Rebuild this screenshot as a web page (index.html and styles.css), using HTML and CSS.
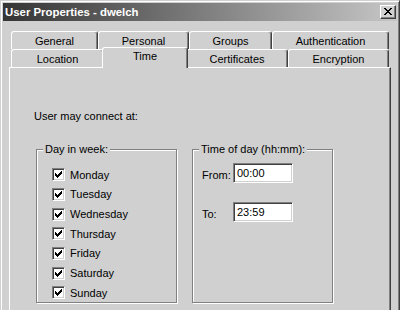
FILE: index.html
```html
<!DOCTYPE html>
<html>
<head>
<meta charset="utf-8">
<link rel="stylesheet" href="styles.css">
</head>
<body>
<div class="window">
  <div class="titlebar">
    <span class="title">User Properties - dwelch</span>
    <span class="close"><svg width="8" height="7" viewBox="0 0 8 7"><path d="M0 0h2v1H0z M6 0h2v1H6z M1 1h2v1H1z M5 1h2v1H5z M2 2h4v1H2z M3 3h2v1H3z M2 4h4v1H2z M1 5h2v1H1z M5 5h2v1H5z M0 6h2v1H0z M6 6h2v1H6z" fill="#000"/></svg></span>
  </div>
  <div class="sheet">
    <div class="row">
      <div class="tab w-general">General</div>
      <div class="tab w-personal">Personal</div>
      <div class="tab w-groups">Groups</div>
      <div class="tab w-auth">Authentication</div>
    </div>
    <div class="row">
      <div class="tab w-location">Location</div>
      <div class="tab sel w-time">Time</div>
      <div class="tab w-certs">Certificates</div>
      <div class="tab w-enc">Encryption</div>
    </div>
    <div class="panel">
      <div class="connect">User may connect at:</div>
      <div class="groups">
        <div class="group">
          <span class="legend">Day in week:</span>
          <div class="days">
            <div class="day"><span class="check"><svg width="7" height="7" viewBox="0 0 7 7"><path d="M0 2h1v3H0z M1 3h1v3H1z M2 4h1v3H2z M3 3h1v3H3z M4 2h1v3H4z M5 1h1v3H5z M6 0h1v3H6z" fill="#000"/></svg></span><span class="label">Monday</span></div>
            <div class="day"><span class="check"><svg width="7" height="7" viewBox="0 0 7 7"><path d="M0 2h1v3H0z M1 3h1v3H1z M2 4h1v3H2z M3 3h1v3H3z M4 2h1v3H4z M5 1h1v3H5z M6 0h1v3H6z" fill="#000"/></svg></span><span class="label">Tuesday</span></div>
            <div class="day"><span class="check"><svg width="7" height="7" viewBox="0 0 7 7"><path d="M0 2h1v3H0z M1 3h1v3H1z M2 4h1v3H2z M3 3h1v3H3z M4 2h1v3H4z M5 1h1v3H5z M6 0h1v3H6z" fill="#000"/></svg></span><span class="label">Wednesday</span></div>
            <div class="day"><span class="check"><svg width="7" height="7" viewBox="0 0 7 7"><path d="M0 2h1v3H0z M1 3h1v3H1z M2 4h1v3H2z M3 3h1v3H3z M4 2h1v3H4z M5 1h1v3H5z M6 0h1v3H6z" fill="#000"/></svg></span><span class="label">Thursday</span></div>
            <div class="day"><span class="check"><svg width="7" height="7" viewBox="0 0 7 7"><path d="M0 2h1v3H0z M1 3h1v3H1z M2 4h1v3H2z M3 3h1v3H3z M4 2h1v3H4z M5 1h1v3H5z M6 0h1v3H6z" fill="#000"/></svg></span><span class="label">Friday</span></div>
            <div class="day"><span class="check"><svg width="7" height="7" viewBox="0 0 7 7"><path d="M0 2h1v3H0z M1 3h1v3H1z M2 4h1v3H2z M3 3h1v3H3z M4 2h1v3H4z M5 1h1v3H5z M6 0h1v3H6z" fill="#000"/></svg></span><span class="label">Saturday</span></div>
            <div class="day"><span class="check"><svg width="7" height="7" viewBox="0 0 7 7"><path d="M0 2h1v3H0z M1 3h1v3H1z M2 4h1v3H2z M3 3h1v3H3z M4 2h1v3H4z M5 1h1v3H5z M6 0h1v3H6z" fill="#000"/></svg></span><span class="label">Sunday</span></div>
          </div>
        </div>
        <div class="group">
          <span class="legend">Time of day (hh:mm):</span>
          <div class="times">
            <div class="trow"><span class="tlabel">From:</span><span class="field">00:00</span></div>
            <div class="trow"><span class="tlabel">To:</span><span class="field">23:59</span></div>
          </div>
        </div>
      </div>
    </div>
  </div>
</div>
</body>
</html>
```
FILE: styles.css
```css
html, body {
  margin: 0;
  background: #d0d0d0;
  overflow: hidden;
}
body {
  font-family: "Liberation Sans", Arial, sans-serif;
  font-size: 11px;
  color: #000;
}
.window {
  width: 400px;
  height: 310px;
  box-sizing: border-box;
  border: 1px solid;
  border-bottom: 0;
  border-color: #d0d0d0 #404040 #404040 #d0d0d0;
  box-shadow: inset 1px 1px 0 #fff, inset -1px 0 0 #808080;
  padding: 2px 2px 0;
}
.titlebar {
  height: 18px;
  display: flex;
  align-items: center;
  background: linear-gradient(to right, #343434, #c6c6c6);
  padding-left: 2px;
}
.title {
  color: #fff;
  font-weight: bold;
  font-size: 11.4px;
  line-height: 18px;
}
.close {
  margin-left: auto;
  margin-right: 1px;
  width: 16px;
  height: 14px;
  box-sizing: border-box;
  background: #d0d0d0;
  border: 1px solid;
  border-color: #fff #404040 #404040 #fff;
  box-shadow: inset -1px -1px 0 #808080;
  display: flex;
  align-items: center;
  justify-content: center;
}
.close svg { display: block; margin: 0 1px 1px 0; }
.sheet {
  margin: 10px 0 0 6px;
  width: 382px;
}
.row {
  display: flex;
  height: 18px;
  margin-left: 2px;
}
.tab {
  box-sizing: border-box;
  height: 18px;
  flex: none;
  background: #d0d0d0;
  border-left: 1px solid #fff;
  border-top: 1px solid #fff;
  border-right: 1px solid #404040;
  box-shadow: inset -1px 0 0 #808080;
  border-radius: 3px 3px 0 0;
  text-align: center;
  line-height: 18px;
}
.tab.sel {
  position: relative;
  z-index: 1;
  height: 21px;
  margin: -2px -2px 0;
  line-height: 17px;
}
.w-general { width: 87px; }
.w-personal { width: 91px; }
.w-groups { width: 83px; }
.w-auth { width: 117px; }
.w-location { width: 93px; }
.w-time { width: 86px; }
.w-certs { width: 102px; }
.w-enc { width: 101px; }
.panel {
  box-sizing: border-box;
  width: 382px;
  height: 243px;
  border-left: 1px solid #fff;
  border-top: 1px solid #fff;
  border-right: 1px solid #404040;
  box-shadow: inset -1px 0 0 #808080;
}
.connect {
  margin: 41px 0 0 24px;
  line-height: 14px;
}
.groups {
  display: flex;
  gap: 15px;
  margin: 26px 0 0 26px;
}
.group {
  position: relative;
  width: 141px;
  height: 154px;
  box-sizing: border-box;
  border: 1px solid #808080;
  box-shadow: inset 1px 1px 0 #fff, 1px 1px 0 #fff;
}
.legend {
  position: absolute;
  top: -8px;
  left: 6px;
  padding: 0 2px;
  background: #d0d0d0;
  line-height: 14px;
  white-space: nowrap;
}
.days {
  padding: 15px 0 0 15px;
}
.day {
  display: flex;
  align-items: center;
  height: 19.67px;
}
.check {
  width: 13px;
  height: 13px;
  box-sizing: border-box;
  flex: none;
  background: #fff;
  border: 1px solid;
  border-color: #808080 #fff #fff #808080;
  box-shadow: inset 1px 1px 0 #404040, inset -1px -1px 0 #d0d0d0;
  display: flex;
  align-items: center;
  justify-content: center;
}
.check svg { display: block; }
.label {
  margin-left: 5px;
  line-height: 14px;
}
.times {
  padding: 13px 0 0 9px;
}
.trow {
  display: flex;
  align-items: center;
  height: 20px;
}
.trow + .trow {
  margin-top: 19px;
}
.tlabel {
  width: 31px;
  flex: none;
  line-height: 14px;
  margin-top: 4px;
}
.field {
  width: 60px;
  height: 20px;
  box-sizing: border-box;
  background: #fff;
  border: 1px solid;
  border-color: #808080 #fff #fff #808080;
  box-shadow: inset 1px 1px 0 #404040, inset -1px -1px 0 #d0d0d0;
  padding-left: 3px;
  line-height: 18px;
}
```
